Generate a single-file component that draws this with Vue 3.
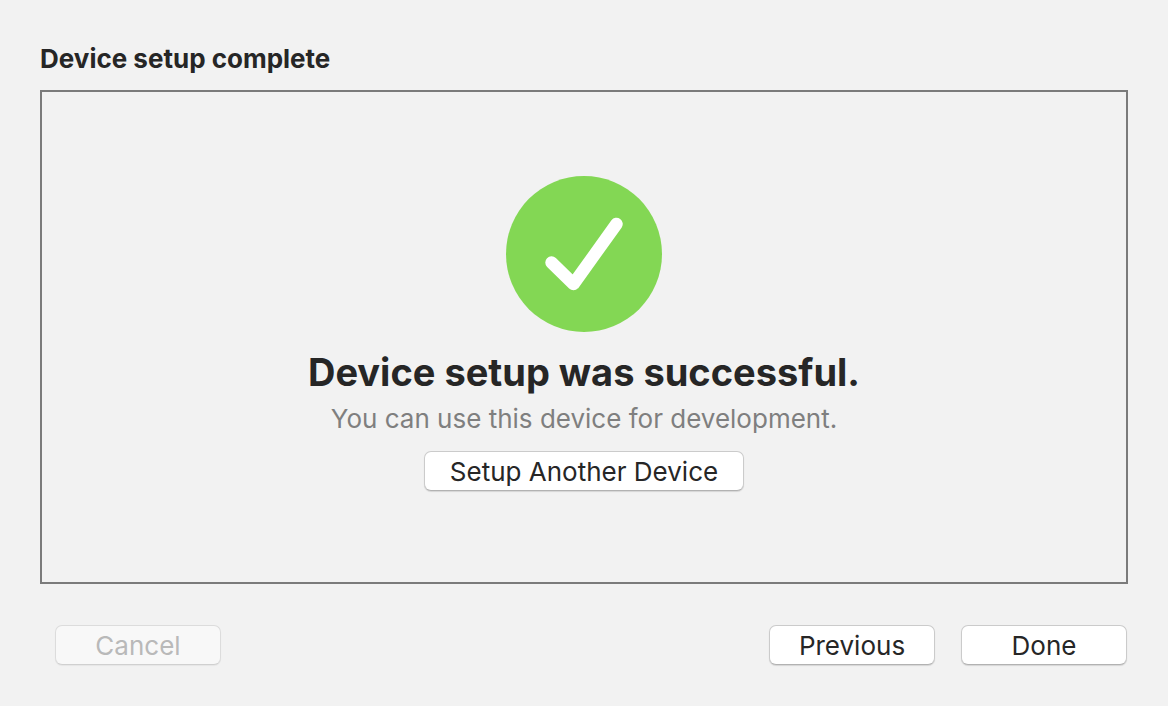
<script setup>
</script>

<template>
  <main class="assistant">
    <h1 class="title">Device setup complete</h1>
    <section class="panel">
      <svg class="badge" viewBox="0 0 156 156" aria-hidden="true">
        <circle cx="78" cy="78" r="78" fill="#83d754" />
        <path d="M45.500 86.500 L67.500 108 L110.500 48" fill="none" stroke="#fff" stroke-width="12.500" stroke-linecap="round" stroke-linejoin="round" />
      </svg>
      <h2 class="headline">Device setup was successful.</h2>
      <p class="note">You can use this device for development.</p>
      <button class="button" type="button">Setup Another Device</button>
    </section>
    <footer class="actions">
      <button class="button" type="button" disabled>Cancel</button>
      <div class="forward">
        <button class="button" type="button">Previous</button>
        <button class="button" type="button">Done</button>
      </div>
    </footer>
  </main>
</template>

<style>
body {
  background: #f2f2f2;
}
</style>

<style scoped>
.assistant {
  box-sizing: border-box;
  min-height: 100vh;
  display: flex;
  flex-direction: column;
  padding: 43px 40px 41px;
  background: #f2f2f2;
  color: #262626;
  font-family: Inter, "Liberation Sans", sans-serif;
}

.title {
  margin: 0 0 15px;
  font-size: 26px;
  line-height: 32px;
  font-weight: 700;
}

.panel {
  flex: 1;
  display: flex;
  flex-direction: column;
  align-items: center;
  padding: 84px 24px;
  border: 2px solid #7b7b7b;
  text-align: center;
}

.badge {
  width: 156px;
  height: 156px;
}

.headline {
  margin: 16px 0 0;
  font-size: 38px;
  line-height: 48px;
  font-weight: 700;
}

.note {
  margin: 7px 0 16px;
  color: #7f7f7f;
  font-size: 26px;
  line-height: 32px;
}

.actions {
  display: flex;
  justify-content: space-between;
  margin-top: 41px;
  padding: 0 1px 0 15px;
}

.forward {
  display: flex;
  gap: 26px;
}

.button {
  box-sizing: border-box;
  min-width: 166px;
  height: 40px;
  padding: 2px 25px 0;
  border: 1px solid #cbcbcb;
  border-bottom-color: #b2b2b2;
  border-radius: 7px;
  background: #fff;
  box-shadow: 0 1px 1px rgba(0, 0, 0, 0.12);
  color: #262626;
  font-family: inherit;
  font-size: 26px;
  line-height: 32px;
}

.button:disabled {
  border-color: #dcdcdc;
  border-bottom-color: #d0d0d0;
  background: #f8f8f8;
  box-shadow: 0 1px 1px rgba(0, 0, 0, 0.05);
  color: #b9b9b9;
}
</style>
